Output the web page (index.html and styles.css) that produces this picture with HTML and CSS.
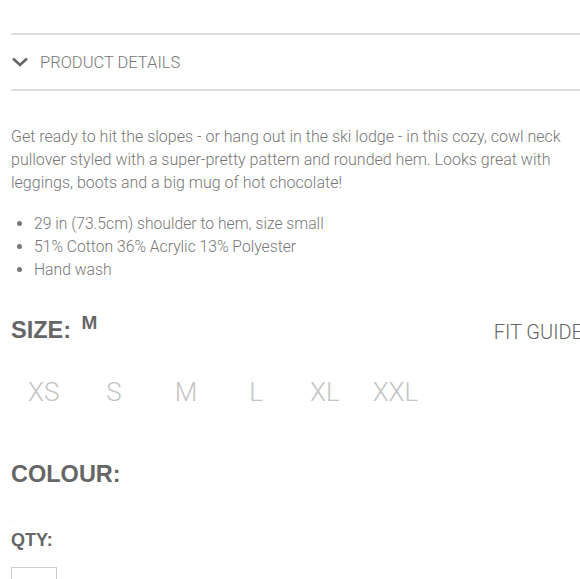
FILE: index.html
```html
<!DOCTYPE html>
<html>
<head>
<meta charset="utf-8">
<link rel="stylesheet" href="styles.css">
</head>
<body>
<div class="page">
  <div class="top-cut"></div>
  <div class="accordion">
    <svg class="chev" width="18" height="12" viewBox="0 0 18 12"><path d="M2 2.5 L9 9 L16 2.5" fill="none" stroke="#666" stroke-width="2.6"/></svg>
    <span class="acc-title">PRODUCT DETAILS</span>
  </div>
  <p class="desc">Get ready to hit the slopes - or hang out in the ski lodge - in this cozy, cowl neck pullover styled with a super-pretty pattern and rounded hem. Looks great with leggings, boots and a big mug of hot chocolate!</p>
  <ul class="specs">
    <li>29 in (73.5cm) shoulder to hem, size small</li>
    <li>51% Cotton 36% Acrylic 13% Polyester</li>
    <li>Hand wash</li>
  </ul>
  <div class="size-head">
    <div class="label">SIZE: <span class="sel">M</span></div>
    <div class="fit">FIT GUIDE</div>
  </div>
  <div class="sizes">
    <span class="sz xs">XS</span>
    <span class="sz s">S</span>
    <span class="sz m">M</span>
    <span class="sz l">L</span>
    <span class="sz xl">XL</span>
    <span class="sz xxl">XXL</span>
  </div>
  <div class="colour label">COLOUR:</div>
  <div class="dot"></div>
  <div class="qty">QTY:</div>
  <div class="qty-box"></div>
</div>
</body>
</html>
```
FILE: styles.css
```css
html, body { margin: 0; padding: 0; background: #fff; }
body { overflow: hidden; width: 580px; height: 579px; font-family: Roboto, "Liberation Sans", Arial, sans-serif; font-weight: 300; color: #777; }
.page { padding-left: 11px; width: 569px; }
.top-cut { height: 33px; }
.accordion {
  border-top: 2px solid #ddd;
  border-bottom: 2px solid #ddd;
  height: 54px;
  display: flex;
  align-items: center;
}
.chev { margin-right: 11px; margin-top: 0; }
.acc-title { font-size: 16.5px; color: #777; }
.desc { margin: 34px 0 0; font-size: 16px; line-height: 23px; color: #777; width: 569px; }
.specs { margin: 18px 0 0; padding: 0 0 0 23px; font-size: 15.7px; line-height: 23px; color: #777; }
.size-head { display: flex; justify-content: space-between; align-items: flex-end; margin-top: 33px; height: 30px; }
.label { font-family: "Liberation Sans", Arial, sans-serif; font-size: 23.5px; font-weight: bold; color: #666; line-height: 28px; }
.sel { font-size: 19px; vertical-align: 9px; margin-left: 4px; }
.fit { font-size: 20px; color: #666; margin-right: -3px; padding-bottom: 0; white-space: nowrap; }
.sizes { display: flex; margin-top: 33px; font-size: 26px; color: #c4c4c4; height: 30px; align-items: center; }
.sz { display: inline-block; }
.xs { margin-left: 17px; }
.s { margin-left: 47px; }
.m { margin-left: 53px; }
.l { margin-left: 52px; }
.xl { margin-left: 47px; }
.xxl { margin-left: 33px; }
.colour { margin-top: 53px; }
.dot { width: 1px; height: 1px; background: #ddd; margin: 33px 0 0 -1px; }
.qty { font-family: "Liberation Sans", Arial, sans-serif; font-size: 18px; font-weight: bold; color: #666; margin-top: 8px; }
.qty-box { width: 44px; height: 30px; border: 1px solid #ccc; margin-top: 16px; }
```
